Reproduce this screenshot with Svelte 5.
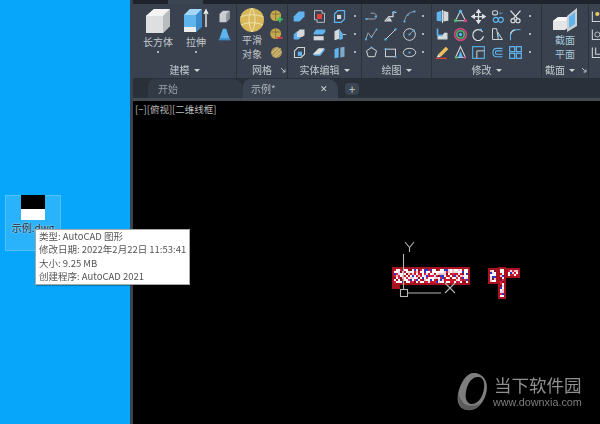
<script>
  const colors = ['#c8182a', '#c8182a', '#d8204a', '#ffffff', '#ffffff', '#ffffff', '#e4dcea', '#3034c0', '#8a1020', '#f4c0c8', '#ffffff'];
  let s = 7;
  const rnd = () => ((s = (s * 16807) % 2147483647) / 2147483647);
  function fill(x, y, w, h) {
    const out = [];
    for (let j = 0; j < h; j += 2) {
      for (let i = 0; i < w; i += 2) {
        const edge = j === 0 || i === 0 || j >= h - 2 || i >= w - 2;
        out.push({ x: x + i, y: y + j, c: edge ? '#a8121f' : colors[Math.floor(rnd() * colors.length)] });
      }
    }
    return out;
  }
  const blocks = [[392, 267, 77, 18], [392, 285, 8, 3], [488, 268, 10, 16], [498, 267, 8, 31], [506, 268, 14, 10]];
  const cells = blocks.flatMap((b) => fill(b[0], b[1], b[2], b[3]));
  const blue = '#5fb4ee';
  const grey = '#9aa3ad';
</script>

{#snippet dot()}<span class="dot"></span>{/snippet}
{#snippet caret()}<span class="caret"></span>{/snippet}
{#snippet corner()}<svg class="corner" viewBox="0 0 6 6"><path d="M1 1 5 5M5 2.500V5H2.500" fill="none" stroke="#b5bcc4" /></svg>{/snippet}

<div class="screen">
  <aside class="desktop">
    <div class="file">
      <div class="thumb"><span class="black"></span><span class="white"></span></div>
      <span class="fname">示例.dwg</span>
    </div>
    <div class="tip">
      <p>类型: AutoCAD 图形</p>
      <p>修改日期: 2022年2月22日 11:53:41</p>
      <p>大小: 9.25 MB</p>
      <p>创建程序: AutoCAD 2021</p>
    </div>
  </aside>

  <main class="window">
    <div class="ribbon-top"><span class="active-tab"></span></div>
    <div class="ribbon">
      <section class="panel p1">
        <div class="body">
          <div class="big">
            <svg width="28" height="28" viewBox="0 0 28 28"><path d="M2 9 10 2H26V19L19 26H2Z" fill="#dedfe0" /><path d="M2 9 10 2H26L19 9Z" fill="#f4f4f4" /><path d="M19 9 26 2V19L19 26Z" fill="#b9bcbf" /></svg>
            <span>长方体</span>{@render dot()}
          </div>
          <div class="big">
            <svg width="28" height="28" viewBox="0 0 28 28"><path d="M2 8 8 2H20V18L14 25H2Z" fill={blue} /><path d="M2 8 8 2H20L14 8Z" fill="#a5d6f7" /><path d="M2 20H14V25H2Z" fill="#eceded" /><path d="M14 8 20 2V20L14 25Z" fill="#3d8ccb" /><path d="M24 20V4M22 7 24 3 26 7" fill="none" stroke="#e8e8e8" stroke-width="1.400" /></svg>
            <span>拉伸</span>{@render dot()}
          </div>
          <div class="col">
            <svg class="ic" viewBox="0 0 18 18"><path d="M3 6 7 2H15V12L11 16H3Z" fill="#c9ccd0" /><path d="M11 6 15 2V12L11 16Z" fill="#8f959c" /></svg>
            <svg class="ic" viewBox="0 0 18 18"><path d="M7 2H11L15 14H3Z" fill={blue} /><path d="M2 14H16V16H2Z" fill="#3d8ccb" /></svg>
          </div>
        </div>
        <div class="title">建模 {@render caret()}</div>
      </section>

      <section class="panel p2">
        <div class="body">
          <div class="big tight">
            <svg width="26" height="26" viewBox="0 0 26 26"><circle cx="13" cy="13" r="12" fill="#d8b85a" /><path d="M1.500 10C8 7 18 7 24.500 10M2 18C8 15 18 15 24 18M13 1C9 8 9 18 13 25M13 1C17 8 17 18 13 25" fill="none" stroke="#f0e3ae" /></svg>
            <span>平滑</span><span>对象</span>
          </div>
          <div class="col">
            <svg class="ic" viewBox="0 0 18 18"><circle cx="8" cy="8" r="6.500" fill="#c9a94e" /><path d="M3 6H13M8 2V14" stroke="#7c6a34" /><path d="M13 9V16M9.500 12.500H16.500" stroke="#41c463" stroke-width="2" /></svg>
            <svg class="ic" viewBox="0 0 18 18"><circle cx="8" cy="8" r="6.500" fill="#c9a94e" /><path d="M3 6H13M8 2V14" stroke="#7c6a34" /><path d="M9.500 13H16.500" stroke="#e2384d" stroke-width="2" /></svg>
            <svg class="ic" viewBox="0 0 18 18"><circle cx="9" cy="9" r="6.500" fill="#b49a52" /><path d="M5 14 14 4M3 10 11 3M7 15 15 8" stroke="#dfd6a6" /></svg>
          </div>
        </div>
        <div class="title">网格 <span class="title-end">{@render corner()}</span></div>
      </section>

      <section class="panel p3">
        <div class="body grid">
          <svg class="ic" viewBox="0 0 18 18"><path d="M2 9 8 3H15V9L9 15H2Z" fill={blue} /></svg>
          <svg class="ic" viewBox="0 0 18 18"><path d="M3 2H12V5H15V16H6V13H3Z" fill="none" stroke="#cfd3d7" /><rect x="6" y="6" width="6" height="6" fill="#e0423f" /></svg>
          <svg class="ic" viewBox="0 0 18 18"><path d="M3 6 7 2H15V12L11 16H3Z" fill="none" stroke={blue} stroke-width="1.500" /><rect x="6" y="7" width="5" height="5" fill="#cfd3d7" /></svg>
          {@render dot()}
          <svg class="ic" viewBox="0 0 18 18"><path d="M2 9 6 5H12V11L8 15H2Z" fill={blue} /><path d="M6 7 9 3H15V10L12 12H6Z" fill="#d5d8db" /></svg>
          <svg class="ic" viewBox="0 0 18 18"><path d="M2 7 5 3H16V6L13 9H2Z" fill={blue} /><path d="M2 11H14V16H2Z" fill="#d5d8db" /></svg>
          <svg class="ic" viewBox="0 0 18 18"><path d="M3 16V5L9 2V14Z" fill="#d5d8db" /><path d="M9 3 13 8V14L9 16Z" fill={blue} /><path d="M13 9H17" stroke="#d5d8db" /></svg>
          {@render dot()}
          <svg class="ic" viewBox="0 0 18 18"><path d="M3 7 7 3H15V11L11 15H3Z" fill="none" stroke="#cfd3d7" stroke-width="1.300" /><rect x="7" y="8" width="5" height="5" fill={blue} /></svg>
          <svg class="ic" viewBox="0 0 18 18"><path d="M1 11 8 5H16L10 13H3Z" fill={blue} /><path d="M1 11 8 4H15L9 11Z" fill="#dcdfe2" /></svg>
          <svg class="ic" viewBox="0 0 18 18"><path d="M3 5 8 3V15L3 16Z" fill={blue} /><path d="M10 3 15 2V14L10 15Z" fill="#7fa9c9" /></svg>
          {@render dot()}
        </div>
        <div class="title">实体编辑 {@render caret()}</div>
      </section>

      <section class="panel p4">
        <div class="body grid">
          <svg class="ic" viewBox="0 0 18 18"><path d="M2 12H12C16 12 16 5 11 5H8" fill="none" stroke={grey} stroke-width="1.200" /><circle cx="3" cy="12" r="1.300" fill={blue} /><circle cx="14" cy="9" r="1.300" fill={blue} /></svg>
          <svg class="ic" viewBox="0 0 18 18"><path d="M2 15 7 9H12V4H16" fill="none" stroke="#cfd3d7" stroke-width="1.500" /><path d="M3 15H11L8 10Z" fill="#cfd3d7" /><circle cx="13" cy="4" r="1.500" fill={blue} /></svg>
          <svg class="ic" viewBox="0 0 18 18"><path d="M3 15C4 8 8 4 15 3" fill="none" stroke={grey} stroke-width="1.200" /><circle cx="3" cy="15" r="1.300" fill={blue} /><circle cx="15" cy="3" r="1.300" fill={blue} /><circle cx="7" cy="7" r="1.100" fill={blue} /></svg>
          {@render dot()}
          <svg class="ic" viewBox="0 0 18 18"><path d="M2 15 5 7 9 12 15 3" fill="none" stroke={grey} stroke-width="1.200" /><circle cx="2.500" cy="15" r="1.200" fill={blue} /><circle cx="9" cy="12" r="1.200" fill={blue} /><circle cx="15" cy="3" r="1.200" fill={blue} /></svg>
          <svg class="ic" viewBox="0 0 18 18"><path d="M3 15 15 3" stroke="#cfd3d7" stroke-width="1.200" /><circle cx="3" cy="15" r="1.400" fill={blue} /><circle cx="15" cy="3" r="1.400" fill={blue} /></svg>
          <svg class="ic" viewBox="0 0 18 18"><circle cx="9" cy="9" r="7" fill="none" stroke="#cfd3d7" stroke-width="1.200" /><path d="M9 9 14 4" stroke={grey} /><circle cx="9" cy="9" r="1.300" fill={blue} /><circle cx="14" cy="4" r="1.300" fill={blue} /></svg>
          {@render dot()}
          <svg class="ic" viewBox="0 0 18 18"><path d="M9 3 15 7 13 14H5L3 7Z" fill="none" stroke="#cfd3d7" stroke-width="1.200" /><circle cx="9" cy="3" r="1.200" fill={blue} /></svg>
          <svg class="ic" viewBox="0 0 18 18"><rect x="3" y="5" width="12" height="9" fill="none" stroke="#cfd3d7" stroke-width="1.200" /><circle cx="3" cy="5" r="1.300" fill={blue} /><circle cx="15" cy="14" r="1.300" fill={blue} /></svg>
          <svg class="ic" viewBox="0 0 18 18"><ellipse cx="9" cy="9" rx="7.500" ry="5" fill="none" stroke="#cfd3d7" stroke-width="1.200" /><circle cx="9" cy="9" r="1.300" fill={blue} /></svg>
          {@render dot()}
        </div>
        <div class="title">绘图 {@render caret()}</div>
      </section>

      <section class="panel p5">
        <div class="body grid">
          <svg class="ic" viewBox="0 0 18 18"><path d="M2 4 8 2V15L2 14Z" fill={blue} /><path d="M10 2 16 4V14L10 15Z" fill="#d5d8db" /><path d="M9 1V17" stroke="#eee" /></svg>
          <svg class="ic" viewBox="0 0 18 18"><path d="M9 2 15 14H3Z" fill="none" stroke="#cfd3d7" stroke-width="1.300" /><circle cx="9" cy="3" r="2" fill={blue} /><circle cx="3" cy="14" r="2" fill="#46b86b" /><circle cx="15" cy="14" r="2" fill="#d0457e" /></svg>
          <svg class="ic" viewBox="0 0 18 18"><path d="M9 2V16M2 9H16M9 1 7 4H11ZM9 17 7 14H11ZM1 9 4 7V11ZM17 9 14 7V11Z" fill="#e0e3e6" stroke="#e0e3e6" stroke-width="1.500" /></svg>
          <svg class="ic" viewBox="0 0 18 18"><rect x="3" y="2" width="6" height="5" rx="2" fill="none" stroke="#cfd3d7" stroke-width="1.300" /><circle cx="7" cy="13" r="3" fill="none" stroke={blue} stroke-width="1.400" /><circle cx="13" cy="13" r="3" fill="none" stroke={blue} stroke-width="1.400" /><path d="M11 5H15" stroke={blue} /></svg>
          <svg class="ic" viewBox="0 0 18 18"><path d="M3 2 11 11M15 2 7 11" stroke="#dfe2e5" stroke-width="1.600" /><circle cx="6" cy="14" r="2.500" fill="none" stroke="#dfe2e5" stroke-width="1.300" /><circle cx="12" cy="14" r="2.500" fill="none" stroke="#dfe2e5" stroke-width="1.300" /></svg>
          {@render dot()}
          <svg class="ic" viewBox="0 0 18 18"><path d="M3 2V10H9L11 7H15V15H3Z" fill="#d5d8db" /><path d="M3 2V10" stroke={blue} stroke-width="2" /><path d="M3 10H9" stroke={blue} stroke-width="2" /></svg>
          <svg class="ic" viewBox="0 0 18 18"><circle cx="9" cy="9" r="7" fill="none" stroke="#d0457e" stroke-width="2" /><circle cx="9" cy="9" r="4.500" fill="none" stroke="#46b86b" stroke-width="2" /><circle cx="9" cy="9" r="2" fill={blue} /></svg>
          <svg class="ic" viewBox="0 0 18 18"><path d="M14 6A6.500 6.500 0 1 0 15 11" fill="none" stroke="#dfe2e5" stroke-width="1.400" /><circle cx="12" cy="3" r="1.200" fill={blue} /></svg>
          <svg class="ic" viewBox="0 0 18 18"><path d="M3 2H8L10 15H3ZM9 6 15 15H10" fill="none" stroke="#cfd3d7" stroke-width="1.200" /><circle cx="11" cy="10" r="1.300" fill={blue} /></svg>
          <svg class="ic" viewBox="0 0 18 18"><path d="M3 16V10C3 5 7 3 15 3" fill="none" stroke={blue} stroke-width="1.300" /><path d="M3 8C4 5 6 4 8 3" stroke="#dfe2e5" fill="none" stroke-width="1.400" /></svg>
          {@render dot()}
          <svg class="ic" viewBox="0 0 18 18"><path d="M4 11 13 2 16 5 7 14Z" fill="#eec05c" /><path d="M4 11 7 14 2 15Z" fill="#e8e8e8" /><path d="M1 16H14" stroke="#e2453c" stroke-width="1.500" /></svg>
          <svg class="ic" viewBox="0 0 18 18"><path d="M9 2 15 15H3Z" fill="none" stroke="#cfd3d7" stroke-width="1.300" /><path d="M9 7 12 15H6Z" fill={blue} /><circle cx="4" cy="15" r="1.500" fill="#46b86b" /><circle cx="14" cy="15" r="1.500" fill="#d0457e" /></svg>
          <svg class="ic" viewBox="0 0 18 18"><rect x="2" y="2" width="14" height="14" fill="none" stroke={blue} stroke-width="1.300" /><path d="M7 16V7H16" fill="none" stroke="#cfd3d7" stroke-width="1.200" /></svg>
          <svg class="ic" viewBox="0 0 18 18"><path d="M15 4H8C2 4 2 14 8 14H15M15 7H8C6 7 6 11 8 11H15" fill="none" stroke={blue} stroke-width="1.300" /></svg>
          <svg class="ic" viewBox="0 0 18 18"><rect x="2" y="2" width="6" height="6" fill="none" stroke={blue} stroke-width="1.500" /><rect x="10" y="2" width="6" height="6" fill="none" stroke={blue} stroke-width="1.500" /><rect x="2" y="10" width="6" height="6" fill="none" stroke={blue} stroke-width="1.500" /><rect x="10" y="10" width="6" height="6" fill="none" stroke={blue} stroke-width="1.500" /></svg>
          {@render dot()}
        </div>
        <div class="title">修改 {@render caret()}</div>
      </section>

      <section class="panel p6">
        <div class="body">
          <div class="big tight">
            <svg width="26" height="26" viewBox="0 0 26 26"><path d="M1 14 6 10H17V20L13 23H1Z" fill="#e3e5e6" /><path d="M1 14 6 10H17L13 14Z" fill="#f6f6f6" /><path d="M15 9 25 1V19L15 25Z" fill="#c9ced3" /><path d="M17 10 23 5V17L17 21Z" fill={blue} /></svg>
            <span class="blueish">截面</span><span class="blueish">平面</span>
          </div>
        </div>
        <div class="title left">截面 {@render caret()}<span class="title-end">{@render corner()}</span></div>
      </section>

      <section class="panel p7">
        <div class="body col wide">
          <svg class="ic" viewBox="0 0 18 18"><path d="M4 3V15H14" fill="none" stroke="#cfd3d7" stroke-width="1.300" /><circle cx="10" cy="6" r="2.500" fill="#e8c860" /></svg>
          <svg class="ic" viewBox="0 0 18 18"><path d="M4 3V15H14" fill="none" stroke="#cfd3d7" stroke-width="1.300" /><circle cx="10" cy="9" r="3" fill="none" stroke="#cfd3d7" /></svg>
          <svg class="ic" viewBox="0 0 18 18"><path d="M4 3V15H14M8 3V11H14" fill="none" stroke="#cfd3d7" stroke-width="1.300" /></svg>
        </div>
      </section>
    </div>

    <nav class="tabs">
      <div class="tab start">开始</div>
      <div class="tab current">示例* <span class="close">✕</span></div>
      <div class="plus">+</div>
    </nav>
    <div class="tab-line"></div>

    <div class="canvas">
      <div class="view">[−][俯视][二维线框]</div>
      <svg class="drawing" width="600" height="424" viewBox="0 0 600 424">
        <g class="model">
          {#each cells as c}
            <rect x={c.x} y={c.y} width="2" height="2" fill={c.c} />
          {/each}
        </g>
        <g fill="none" stroke="#b5b5b5" stroke-width="1.100">
          <path d="M403.500 254V289M408 293H441" />
          <rect x="400.500" y="289.500" width="7" height="7" />
          <path d="M405 242 409.500 247.500 414 242M409.500 247.500V252" />
          <path d="M445 283 455 293M455 283 445 293" />
        </g>
      </svg>
      <div class="mark">
        <svg width="32" height="38" viewBox="0 0 32 38"><g transform="rotate(14 16 19)"><path fill-rule="evenodd" d="M15 0C24 0 30 8 29 19 28 30 22 38 13 38 5 38 1 30 2 19 3 8 7 0 15 0ZM19 3C13 3 9 9 9 18 9 26 12 31 16 31 22 31 26 25 26 16 26 8 23 3 19 3Z" fill="#7e7e7e" /><path d="M2 22C3 31 7 38 13 38 18 38 23 35 26 28 21 33 13 35 8 31 5 29 3 26 2 22Z" fill="#5a5a5a" /></g></svg>
        <div class="mark-text">
          <strong>当下软件园</strong>
          <span>www.downxia.com</span>
        </div>
      </div>
    </div>
  </main>
</div>

<style>
  :global(body) {
    margin: 0;
    background: #000;
  }
  .screen {
    display: grid;
    grid-template-columns: 130px 470px;
    width: 600px;
    height: 424px;
    overflow: hidden;
    position: relative;
    filter: blur(0.35px);
    font-family: "Noto Sans CJK SC", "Liberation Sans", sans-serif;
  }
  .desktop {
    background: #07a6fb;
    padding: 195px 0 0 5px;
    position: relative;
  }
  .file {
    width: 56px;
    height: 56px;
    box-sizing: border-box;
    background: rgba(255, 255, 255, 0.14);
    border: 1px solid rgba(255, 255, 255, 0.2);
    display: flex;
    flex-direction: column;
    align-items: center;
  }
  .thumb {
    width: 24px;
    height: 25px;
    margin-top: -1px;
    display: flex;
    flex-direction: column;
  }
  .black {
    height: 14px;
    background: #000;
  }
  .white {
    height: 11px;
    background: #fff;
  }
  .fname {
    font-size: 10px;
    line-height: 16px;
    color: #1a2a35;
    text-shadow: 0 0 2px #fff;
  }
  .tip {
    position: absolute;
    left: 35px;
    top: 229px;
    width: 155px;
    height: 56px;
    box-sizing: border-box;
    padding: 0 0 0 3px;
    background: #fff;
    border: 1px solid #a8a8a8;
    box-shadow: 1px 1px 1px rgba(0, 0, 0, 0.25);
    z-index: 2;
  }
  .tip p {
    margin: 0;
    font-size: 9.5px;
    line-height: 13.4px;
    color: #555;
    white-space: nowrap;
  }
  .window {
    display: flex;
    flex-direction: column;
    border-left: 3px solid #3a4450;
    min-width: 0;
  }
  .ribbon-top {
    height: 4px;
    background: #1e232c;
    padding-left: 35px;
  }
  .active-tab {
    display: block;
    width: 35px;
    height: 4px;
    background: #3c4552;
  }
  .ribbon {
    display: flex;
    height: 74px;
    background: #39424e;
    color: #c3c9cf;
  }
  .panel {
    display: flex;
    flex-direction: column;
    box-sizing: border-box;
    border-right: 1px solid #2b323c;
    flex: none;
  }
  .p1 { width: 104px; }
  .p2 { width: 51px; }
  .p3 { width: 74px; }
  .p4 { width: 70px; }
  .p5 { width: 110px; }
  .p6 { width: 47px; }
  .p7 { width: 14px; border-right: 0; }
  .body {
    height: 58px;
    box-sizing: border-box;
    padding-top: 3px;
    display: flex;
  }
  .p1 .body { padding-left: 6px; }
  .grid {
    display: grid;
    grid-auto-rows: 18px;
    align-items: center;
    justify-items: center;
  }
  .p3 .grid {
    grid-template-columns: 18px 18px 18px 10px;
    column-gap: 2px;
    padding-left: 2px;
  }
  .p4 .grid {
    grid-template-columns: 18px 18px 18px 8px;
    column-gap: 1px;
    padding-left: 0;
  }
  .p5 .grid {
    grid-template-columns: 18px 18px 18px 18px 18px 10px;
    padding-left: 1px;
    column-gap: 0.4px;
  }
  .ic {
    width: 15px;
    height: 15px;
    display: block;
    flex: none;
  }
  .col {
    display: flex;
    flex-direction: column;
    width: 18px;
    align-items: center;
    gap: 3px;
    padding-top: 1.5px;
  }
  .body.col {
    padding-top: 4.5px;
  }
  .col.wide {
    width: auto;
  }
  .big {
    width: 38px;
    display: flex;
    flex-direction: column;
    align-items: center;
    font-size: 10px;
    line-height: 14px;
    white-space: nowrap;
  }
  .big svg {
    flex: none;
  }
  .p1 .big span:not(.dot) {
    margin-bottom: 1px;
  }
  .tight {
    width: 30px;
  }
  .p6 .tight {
    width: 46px;
  }
  .blueish {
    color: #a9c8dc;
  }
  .dot {
    display: block;
    width: 2px;
    height: 2px;
    background: #d5d9dd;
    border-radius: 50%;
  }
  .big .dot {
    margin-top: 1px;
  }
  .title {
    height: 16px;
    position: relative;
    font-size: 10px;
    line-height: 16px;
    display: flex;
    align-items: center;
    justify-content: center;
    gap: 4px;
    white-space: nowrap;
  }
  .title.left {
    justify-content: flex-start;
    padding-left: 3px;
  }
  .title-end {
    position: absolute;
    right: 1px;
    top: 5px;
    display: block;
    line-height: 0;
  }
  .corner {
    width: 6px;
    height: 6px;
  }
  .caret {
    width: 0;
    height: 0;
    border-left: 3px solid transparent;
    border-right: 3px solid transparent;
    border-top: 3px solid #cdd2d7;
  }
  .tabs {
    height: 20px;
    box-sizing: border-box;
    background: #2a303a;
    display: flex;
    align-items: stretch;
    padding-left: 15px;
    font-size: 10px;
    line-height: 20px;
    flex: none;
    padding-top: 1px;
  }
  .tab {
    width: 95px;
    box-sizing: border-box;
    padding-left: 10px;
    border-radius: 7px 10px 0 0;
    color: #98a0a8;
    position: relative;
  }
  .start {
    background: #323a46;
  }
  .current {
    background: #3b4451;
    color: #b4bac0;
    padding-left: 8px;
    padding-right: 8px;
  }
  .close {
    position: absolute;
    right: 10px;
    top: 0;
    font-size: 9px;
    color: #d0d4d8;
  }
  .plus {
    width: 14px;
    height: 12px;
    margin: 4px 0 0 7px;
    background: #3b4451;
    border-radius: 4px;
    font-size: 12px;
    line-height: 12px;
    text-align: center;
    color: #c3c9cf;
  }
  .tab-line {
    height: 3px;
    background: #464c54;
    flex: none;
  }
  .canvas {
    flex: 1;
    background: #000;
    position: relative;
    min-height: 0;
  }
  .view {
    font-size: 9.5px;
    line-height: 14px;
    padding: 3px 0 0 2px;
    margin-top: -2px;
    color: #bdbdbd;
  }
  .drawing {
    position: absolute;
    left: -133px;
    top: -101px;
  }
  .model {
    filter: blur(0.5px);
  }
  .mark {
    position: absolute;
    left: 324px;
    top: 272px;
    display: flex;
    gap: 5px;
    color: #8f8f8f;
  }
  .mark-text {
    display: flex;
    flex-direction: column;
    gap: 3px;
    margin-top: 3px;
  }
  .mark-text strong {
    font-weight: 400;
    font-size: 17.5px;
    line-height: 17px;
    white-space: nowrap;
  }
  .mark-text span {
    font-family: "Liberation Sans", sans-serif;
    font-size: 10.8px;
    line-height: 13px;
    color: #7d7d7d;
    white-space: nowrap;
    margin-left: -1px;
  }
</style>
